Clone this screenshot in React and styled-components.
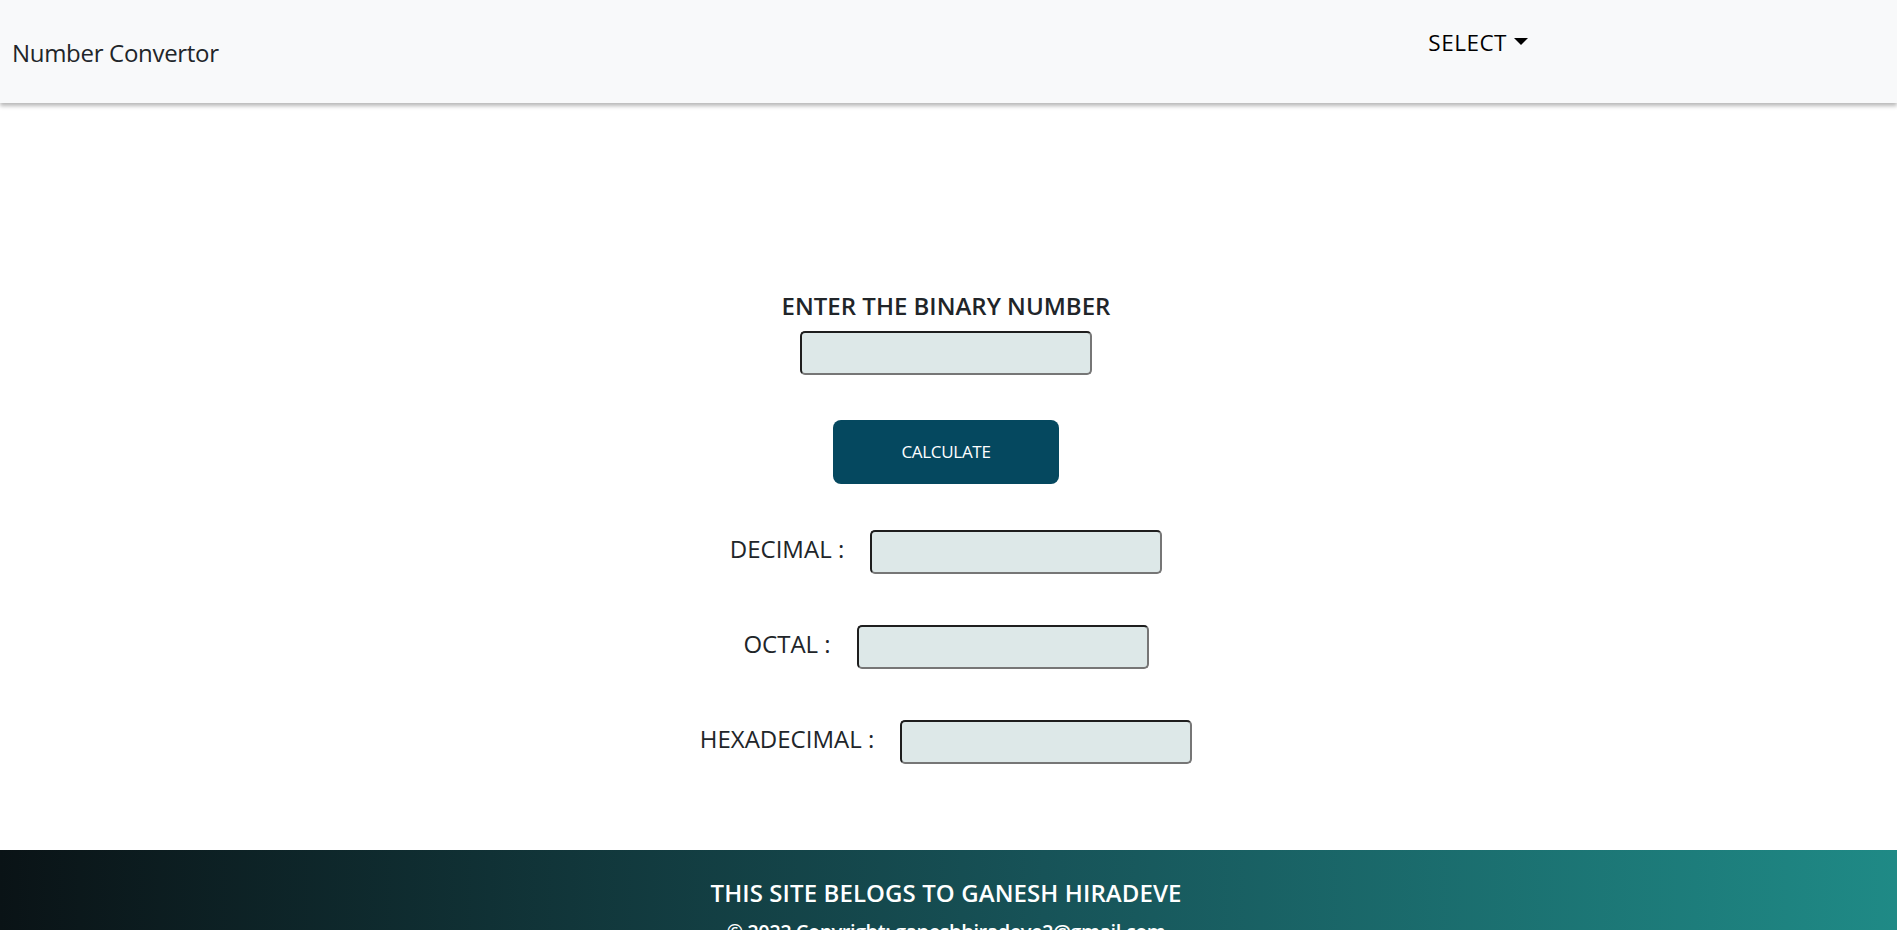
import React from "react";
import styled, { createGlobalStyle } from "styled-components";

const GlobalStyle = createGlobalStyle`
  * { box-sizing: border-box; }
  html, body { margin: 0; padding: 0; background: #ffffff; }
  body {
    font-family: "Open Sans", "Noto Sans", "Liberation Sans", sans-serif;
    color: #212529;
  }
`;

const Page = styled.div`
  display: flex;
  flex-direction: column;
  min-height: 100vh;
`;

const Navbar = styled.nav`
  position: relative;
  z-index: 2;
  display: flex;
  align-items: flex-start;
  height: 103px;
  padding: 0 12px;
  background: #f8f9fa;
  box-shadow: 0 3px 4px rgba(0, 0, 0, 0.28);
`;

const Brand = styled.a`
  margin-top: 35px;
  font-size: 24px;
  line-height: 1.5;
  letter-spacing: -0.3px;
  color: #212529;
  text-decoration: none;
`;

const NavMenu = styled.ul`
  list-style: none;
  margin: 26px 357px 0 auto;
  padding: 0;
  display: flex;
`;

const DropToggle = styled.a`
  display: flex;
  align-items: center;
  font-size: 22.5px;
  letter-spacing: 0.5px;
  line-height: 1.5;
  color: #000;
  text-decoration: none;
  cursor: pointer;

  &::after {
    content: "";
    display: inline-block;
    margin-left: 7px;
    margin-top: -2px;
    border-top: 7px solid #000;
    border-left: 7.5px solid transparent;
    border-right: 7.5px solid transparent;
  }
`;

const Main = styled.main`
  flex: 1;
  display: flex;
  flex-direction: column;
  align-items: center;
  padding: 189px 5px 86px 0;
`;

const Heading = styled.label`
  font-size: 24px;
  font-weight: 600;
  line-height: 1.2;
  color: #212529;
`;

const Field = styled.input`
  width: 292px;
  height: 44px;
  margin-top: ${(p) => p.$top || 0}px;
  padding: 4px 8px;
  background: #dde8e8;
  border-style: solid;
  border-width: 2px;
  border-color: #1e1e1e #767676 #767676 #1e1e1e;
  border-radius: 5px;
  font-family: inherit;
  font-size: 18px;
  outline: none;
`;

const CalcButton = styled.button`
  width: 226px;
  height: 64px;
  margin-top: 45px;
  border: none;
  border-radius: 8px;
  background: #05485f;
  color: #ffffff;
  font-family: "Open Sans", "Noto Sans", sans-serif;
  font-size: 17px;
  letter-spacing: -0.3px;
  cursor: pointer;
`;

const Results = styled.div`
  display: flex;
  flex-direction: column;
  align-items: center;
  gap: 51px;
  margin-top: 46px;
`;

const ResultRow = styled.div`
  display: flex;
  align-items: center;
  gap: 26px;
`;

const RowLabel = styled.label`
  font-size: 24px;
  line-height: 1.2;
  color: #212529;
  margin-top: -4px;
`;

const Footer = styled.footer`
  display: flex;
  flex-direction: column;
  align-items: center;
  padding: 29px 5px 30px 0;
  background: linear-gradient(90deg, #0a1316 0%, #175358 55%, #1f8a86 100%);
  color: #ffffff;
`;

const FooterTitle = styled.div`
  font-size: 24px;
  font-weight: 600;
  line-height: 1.2;
  letter-spacing: 0.1px;
`;

const Copyright = styled.div`
  margin-top: 12px;
  font-size: 20px;
  font-weight: 600;
  line-height: 1.2;
  letter-spacing: -0.5px;
`;

const results = ["DECIMAL :", "OCTAL :", "HEXADECIMAL :"];

export default function App() {
  return (
    <Page>
      <GlobalStyle />
      <Navbar>
        <Brand href="#">Number Convertor</Brand>
        <NavMenu>
          <li>
            <DropToggle>SELECT</DropToggle>
          </li>
        </NavMenu>
      </Navbar>
      <Main>
        <Heading>ENTER THE BINARY NUMBER</Heading>
        <Field $top={10} type="text" />
        <CalcButton>CALCULATE</CalcButton>
        <Results>
          {results.map((r) => (
            <ResultRow key={r}>
              <RowLabel>{r}</RowLabel>
              <Field type="text" readOnly />
            </ResultRow>
          ))}
        </Results>
      </Main>
      <Footer>
        <FooterTitle>THIS SITE BELOGS TO GANESH HIRADEVE</FooterTitle>
        <Copyright>© 2022 Copyright: ganeshhiradeve2@gmail.com</Copyright>
      </Footer>
    </Page>
  );
}
